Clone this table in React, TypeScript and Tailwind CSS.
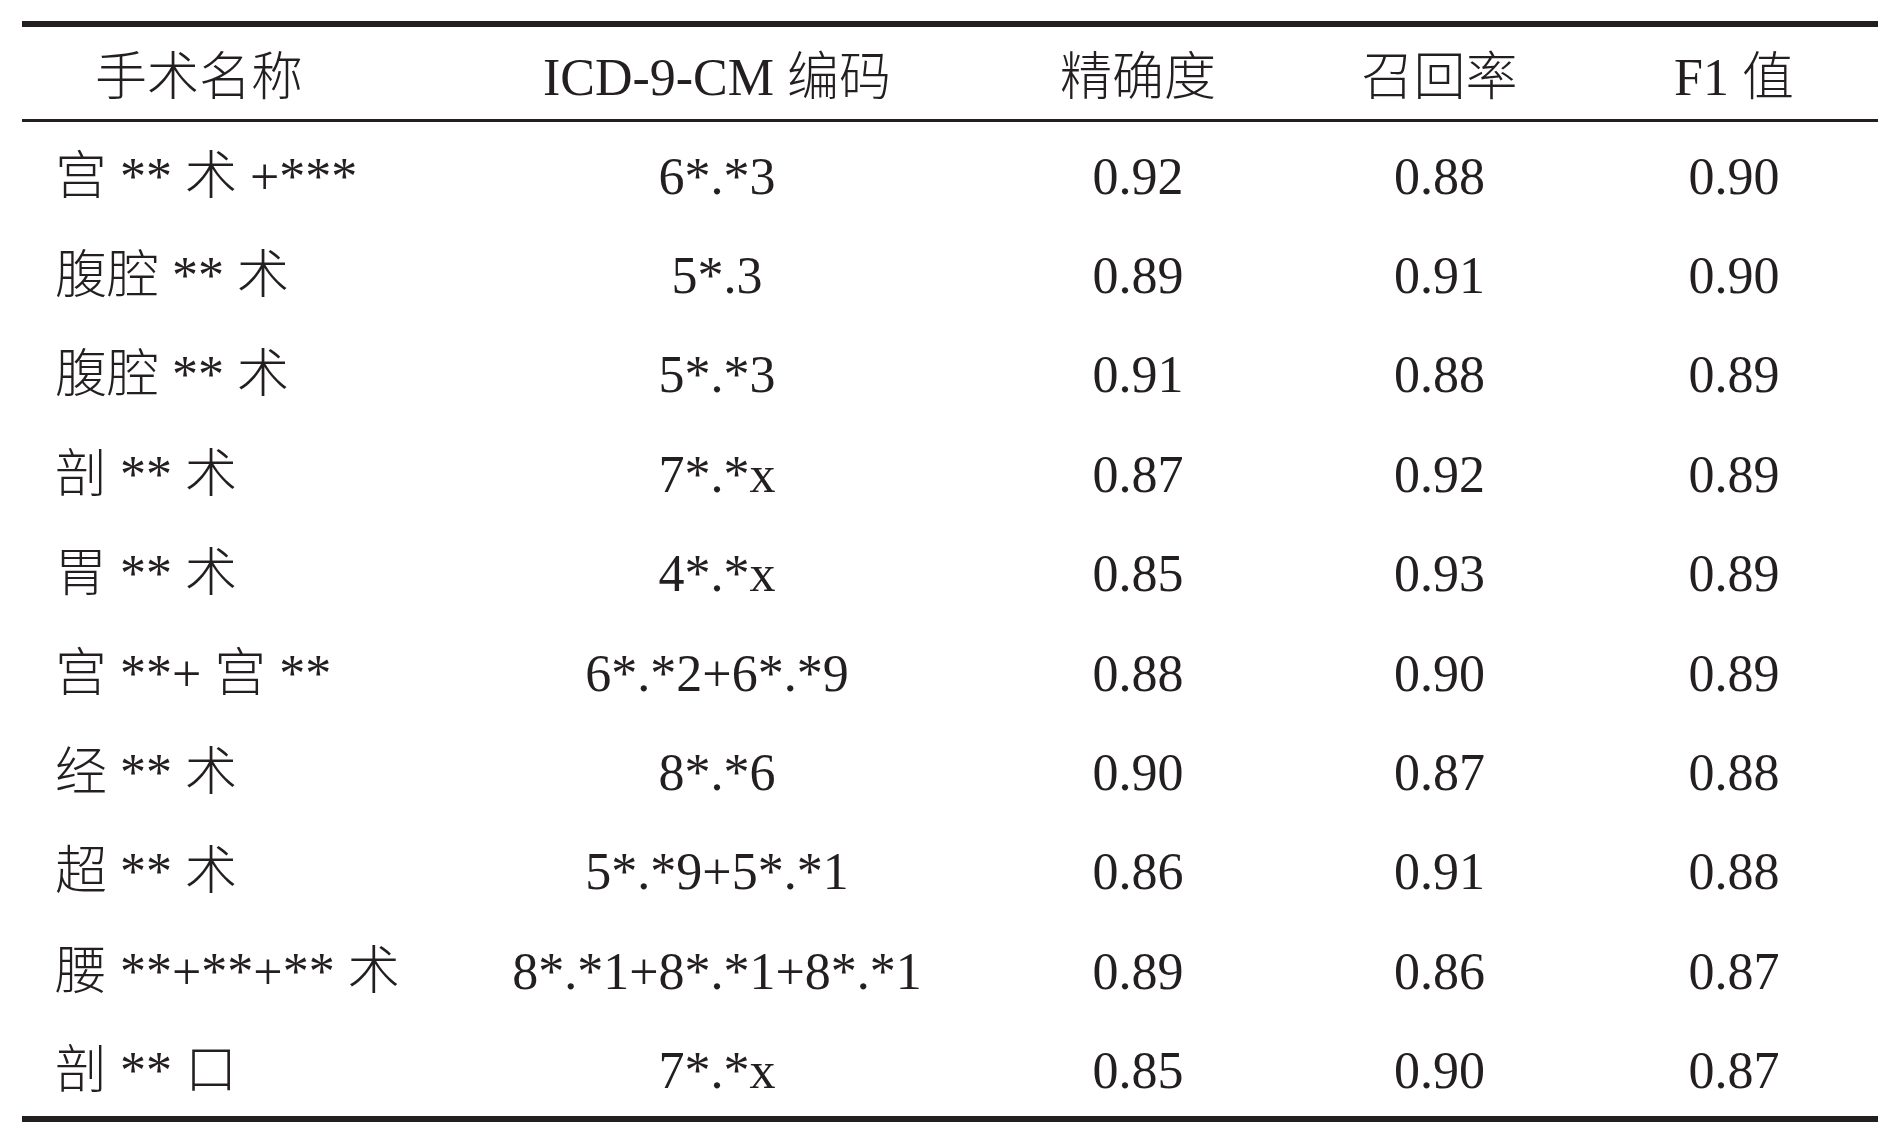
const headers = ['手术名称', 'ICD-9-CM 编码', '精确度', '召回率', 'F1 值'];

const rows = [
  ['宫 ** 术 +***', '6*.*3', '0.92', '0.88', '0.90'],
  ['腹腔 ** 术', '5*.3', '0.89', '0.91', '0.90'],
  ['腹腔 ** 术', '5*.*3', '0.91', '0.88', '0.89'],
  ['剖 ** 术', '7*.*x', '0.87', '0.92', '0.89'],
  ['胃 ** 术', '4*.*x', '0.85', '0.93', '0.89'],
  ['宫 **+ 宫 **', '6*.*2+6*.*9', '0.88', '0.90', '0.89'],
  ['经 ** 术', '8*.*6', '0.90', '0.87', '0.88'],
  ['超 ** 术', '5*.*9+5*.*1', '0.86', '0.91', '0.88'],
  ['腰 **+**+** 术', '8*.*1+8*.*1+8*.*1', '0.89', '0.86', '0.87'],
  ['剖 ** 口', '7*.*x', '0.85', '0.90', '0.87'],
];

export default function App() {
  return (
    <div className="min-h-screen bg-white pl-[22px] pt-[21px] font-['Liberation_Serif','Noto_Sans_CJK_SC',serif] font-light text-[52px] leading-none text-[#231f20]">
      <div className="w-[1856px] border-t-[6px] border-b-[6px] border-[#231f20]">
        <div className="grid h-[95px] grid-cols-[425px_540px_302px_301px_288px] items-center border-b-[3px] border-[#231f20] pt-[9px]">
          {headers.map((h, i) => (
            <div key={h} className={i === 0 ? 'pl-[73px]' : 'text-center'}>
              {h}
            </div>
          ))}
        </div>
        {rows.map((r, ri) => (
          <div
            key={ri}
            className="grid h-[99.4px] grid-cols-[425px_540px_302px_301px_288px] items-center pt-[10px]"
          >
            {r.map((c, ci) => (
              <div key={ci} className={ci === 0 ? 'pl-[33px]' : 'text-center'}>
                {c}
              </div>
            ))}
          </div>
        ))}
      </div>
    </div>
  );
}
